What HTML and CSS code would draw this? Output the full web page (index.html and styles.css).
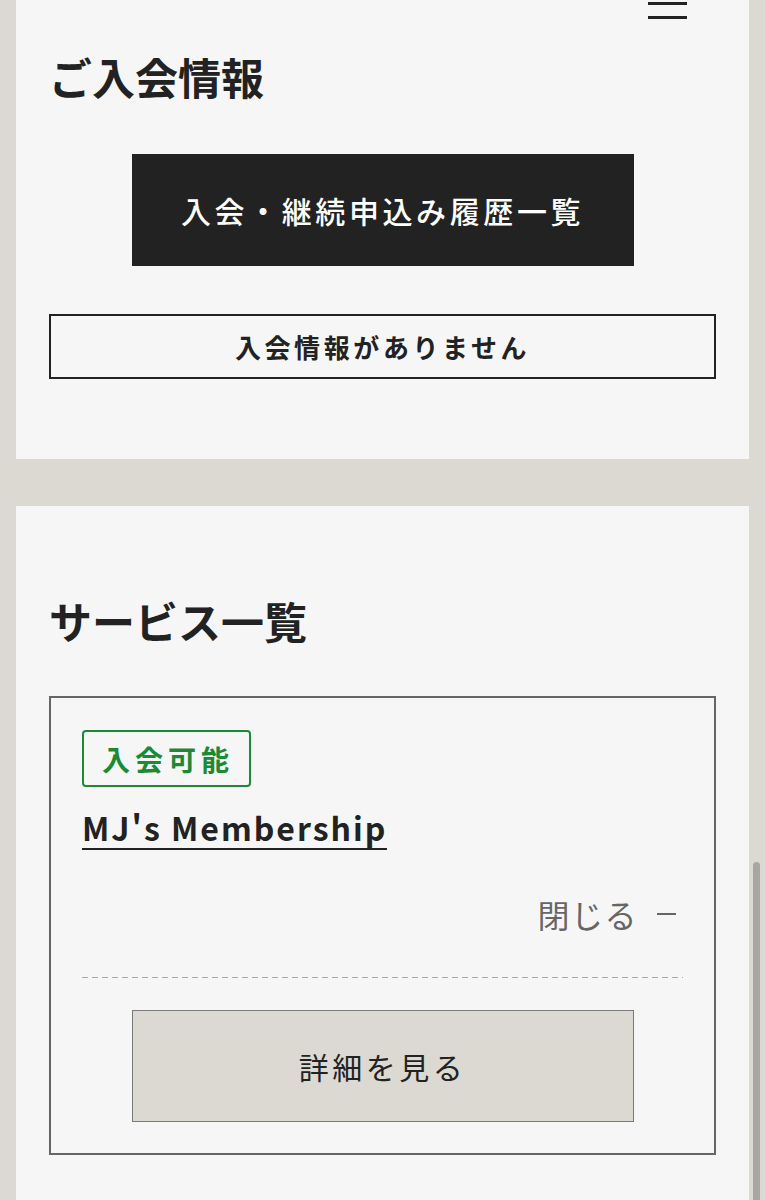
FILE: index.html
```html
<!DOCTYPE html>
<html lang="ja">
<head>
<meta charset="utf-8">
<title>ご入会情報</title>
<link rel="stylesheet" href="styles.css">
</head>
<body>
<div class="page">
  <section class="card card-member">
    <div class="menu-row">
      <button class="menu-btn" aria-label="メニュー"><span></span><span></span><span></span></button>
    </div>
    <h2 class="heading heading-member">ご入会情報</h2>
    <a class="btn-dark" href="#">入会・継続申込み履歴一覧</a>
    <div class="notice">入会情報がありません</div>
  </section>

  <section class="card card-service">
    <h2 class="heading">サービス一覧</h2>
    <div class="service">
      <span class="badge">入会可能</span>
      <div class="title-row"><a class="service-title" href="#">MJ's Membership</a></div>
      <div class="toggle-row"><span class="toggle">閉じる</span></div>
      <div class="dash"></div>
      <a class="btn-light" href="#">詳細を見る</a>
    </div>
  </section>
</div>
<div class="scrollbar"></div>
</body>
</html>
```

FILE: styles.css
```css
html, body {
  margin: 0;
  padding: 0;
  background: #dcd9d2;
  font-family: "Noto Sans CJK JP", "Noto Sans", sans-serif;
  color: #222;
}

.page {
  padding: 0 16px 0 16px;
  display: flex;
  flex-direction: column;
  gap: 47px;
}

.card {
  background: #f6f6f6;
  padding: 0 33px;
  display: flex;
  flex-direction: column;
}

.card-member {
  padding-bottom: 80px;
}

.card-service {
  padding-top: 93px;
  padding-bottom: 60px;
}

.menu-row {
  display: flex;
  justify-content: flex-end;
  margin-top: -12px;
  padding-right: 29px;
}

.menu-btn {
  display: flex;
  flex-direction: column;
  gap: 11px;
  width: 39px;
  padding: 0;
  border: 0;
  background: transparent;
}

.menu-btn span {
  display: block;
  height: 3px;
  background: #222;
}

.heading {
  margin: 0;
  font-size: 43px;
  line-height: 1;
  font-weight: 700;
  color: #222;
}

.heading-member {
  margin-top: 36px;
}

.btn-dark {
  align-self: center;
  margin-top: 56px;
  width: 502px;
  height: 112px;
  background: #222;
  color: #fff;
  text-decoration: none;
  display: flex;
  align-items: center;
  justify-content: center;
  font-size: 30px;
  letter-spacing: 3.6px;
  font-weight: 500;
}

.notice {
  margin-top: 48px;
  height: 61px;
  border: 2px solid #222;
  display: flex;
  align-items: center;
  justify-content: center;
  font-size: 26px;
  letter-spacing: 3.6px;
  font-weight: 700;
}

.service {
  margin-top: 54px;
  border: 2px solid #666;
  padding: 32px 31px 31px;
  display: flex;
  flex-direction: column;
}

.badge {
  align-self: flex-start;
  height: 53px;
  padding: 0 15px 0 18px;
  border: 2px solid #1a8a33;
  border-radius: 4px;
  color: #1a8a33;
  font-size: 28px;
  letter-spacing: 5px;
  font-weight: 700;
  display: flex;
  align-items: center;
}

.title-row {
  margin-top: 24px;
}

.service-title {
  display: inline-block;
  font-size: 32px;
  line-height: 32px;
  font-weight: 700;
  letter-spacing: 2px;
  color: #222;
  text-decoration: none;
  padding-bottom: 5px;
  border-bottom: 2px solid #222;
}

.toggle-row {
  margin-top: 48px;
  display: flex;
  justify-content: flex-end;
  padding-right: 7px;
}

.toggle {
  display: flex;
  align-items: center;
  font-size: 32px;
  line-height: 1;
  letter-spacing: 1.5px;
  color: #666;
}

.toggle::after {
  content: "";
  display: block;
  width: 19px;
  height: 2px;
  margin-left: 19px;
  background: #666;
}

.dash {
  margin-top: 47px;
  height: 1px;
  background: repeating-linear-gradient(to right, #a8a8a8 0 6px, transparent 6px 10px);
}

.btn-light {
  align-self: center;
  margin-top: 32px;
  width: 500px;
  height: 110px;
  border: 1px solid #7a7a7a;
  background: #dcd9d2;
  color: #222;
  text-decoration: none;
  display: flex;
  align-items: center;
  justify-content: center;
  font-size: 30px;
  letter-spacing: 3.5px;
}

.scrollbar {
  position: fixed;
  right: 5px;
  top: 862px;
  width: 7px;
  height: 360px;
  border-radius: 4px;
  background: #a9a6a1;
}
```
